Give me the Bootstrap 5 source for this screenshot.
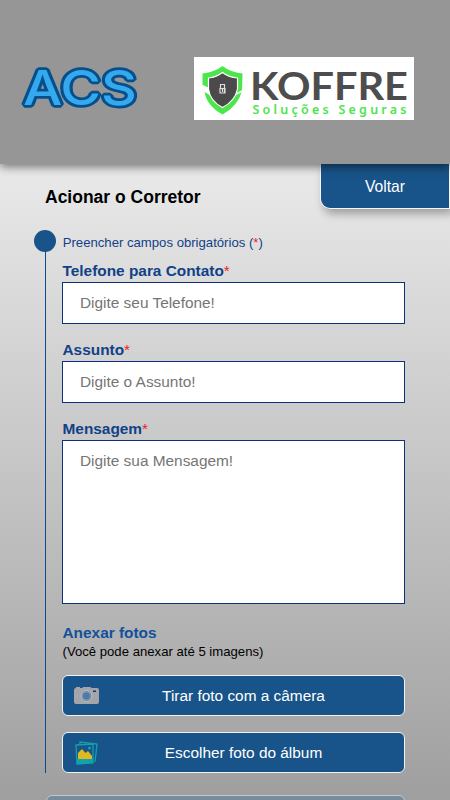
<!DOCTYPE html>
<html lang="pt-BR">
<head>
<meta charset="utf-8">
<meta name="viewport" content="width=device-width, initial-scale=1">
<title>Acionar o Corretor</title>
<link href="https://cdn.jsdelivr.net/npm/bootstrap@5.3.0/dist/css/bootstrap.min.css" rel="stylesheet">
<style>
html,body{height:800px;overflow:hidden}
body{font-family:"Liberation Sans",Arial,sans-serif;color:#000;background:linear-gradient(#eaeaea 164px,#dfdfdf 250px,#9f9f9f 800px)}
.topbar{height:164px;background:#969696;box-shadow:0 3px 9px rgba(0,0,0,.5);position:relative;z-index:2;padding:57px 36px 0 16px}
.titlebar{height:66px;padding-left:45px}
.page-title{font-size:17.5px;font-weight:700;line-height:20px;margin-top:23px}
.btn-back{width:130px;height:45px;background:#185489;color:#fff;font-size:15.7px;line-height:20px;border:solid #f5f5f5;border-width:0 1px 1px 1px;border-radius:0 0 0 10px;box-shadow:3px 5px 8px rgba(0,0,0,.3);padding:1px 0 0}
.steps{margin-left:44px;width:361px;height:543px;padding-left:18px;position:relative}
.steps::before{content:"";position:absolute;left:1px;top:11px;width:1px;height:532px;background:#0c4a94}
.steps::after{content:"";position:absolute;left:-10px;top:0;width:22px;height:22px;border-radius:50%;background:#185489}
.hint{font-size:13.15px;line-height:18px;color:#114187;padding:4px 0 0 .7px;margin-bottom:9px}
.field-label{display:block;font-size:15.4px;line-height:20px;font-weight:700;color:#114187;margin-bottom:1px;padding-left:.5px}
.req{color:#f01c24;font-weight:400}
.field{height:42px;border:1px solid #0c2f7e;border-radius:0;background:#fff;padding:0 17px;font-size:15.4px;line-height:40px;display:block;color:#333}
.field::placeholder{color:#757575;opacity:1}
textarea.field{height:164px;line-height:20px;padding-top:10px;resize:none}
.photos{padding-top:19px;margin-bottom:0;color:#11509b}
.note{font-size:13.15px;line-height:17px;padding-left:.5px;margin-bottom:15px}
.btn-photo{height:41px;width:343px;background:#185489;border:1px solid #f2f2f2;border-radius:6px;color:#fff;font-size:15.4px;line-height:20px;padding:0 10px}
.btn-photo svg{width:28px;height:28px;flex:none}
.btn-send{margin-left:46px;width:359px;height:44px;background:#788c9e;border:1px solid #c4c8cc;border-radius:6px;margin-top:22px}
</style>
<script src="https://cdn.jsdelivr.net/npm/bootstrap@5.3.0/dist/js/bootstrap.bundle.min.js"></script>
</head>
<body>
<header class="topbar d-flex justify-content-between align-items-start">
<svg width="130" height="66" viewBox="0 0 130 66" role="img" aria-label="ACS">
<text x="7" y="48" textLength="114" lengthAdjust="spacingAndGlyphs" font-family="Inter, sans-serif" font-weight="500" font-size="48" fill="#35a9ee" stroke="#064f8d" stroke-width="5.500" stroke-linejoin="bevel" paint-order="stroke">ACS</text>
</svg>
<svg width="220" height="63" viewBox="0 0 220 63" role="img" aria-label="Koffre Soluções Seguras">
<rect width="220" height="63" fill="#fff"/>
<path d="M28.500 9Q36 15 48.500 16.500L48 34Q44 49 28.500 57.500Q13 49 10.500 35L19 40Q21 46 28.500 50Q39 44 41.500 32L42 21Q34 20 28.500 16Q22 20 15 21V29L20 33L8.500 28V16.500Q21 15 28.500 9Z" fill="#4be64b"/>
<path d="M28.500 15.500Q35 20.500 43.500 21V32Q41 44 28.500 50.500Q16 44 14.500 32V21Q22 20.500 28.500 15.500Z" fill="#4b494a" stroke="#fff" stroke-width="1.200"/>
<path d="M42.500 37L49 33.500M8.500 29L14 32" stroke="#fff" stroke-width="1.500"/>
<path d="M26.500 31V27.500H30.500V36M26 31.500H31V36H26ZM28.500 32V35" fill="none" stroke="#ddd" stroke-width="1.200"/>
<text x="56" y="42.500" textLength="158" lengthAdjust="spacingAndGlyphs" font-family="Lato, sans-serif" font-weight="700" font-size="39" fill="#4e4d4d">KOFFRE</text>
<text x="58.500" y="56.500" textLength="154" font-family="Noto Sans, sans-serif" font-weight="600" font-size="12.500" fill="#4be64b">Soluções Seguras</text>
</svg>
</header>
<main>
<div class="titlebar d-flex justify-content-between align-items-start">
<h1 class="page-title mb-0">Acionar o Corretor</h1>
<button class="btn-back" type="button">Voltar</button>
</div>
<form class="steps">
<div class="hint">Preencher campos obrigatórios (<span class="req">*</span>)</div>
<div class="mb-3"><label class="field-label" for="tel">Telefone para Contato<span class="req">*</span></label>
<input class="field w-100" id="tel" placeholder="Digite seu Telefone!"></div>
<div class="mb-3"><label class="field-label" for="subject">Assunto<span class="req">*</span></label>
<input class="field w-100" id="subject" placeholder="Digite o Assunto!"></div>
<label class="field-label" for="message">Mensagem<span class="req">*</span></label>
<textarea class="field w-100" id="message" placeholder="Digite sua Mensagem!"></textarea>
<div class="field-label photos">Anexar fotos</div>
<div class="note">(Você pode anexar até 5 imagens)</div>
<button type="button" class="btn-photo d-flex align-items-center mb-3">
<svg viewBox="0 0 28 28" aria-hidden="true"><path d="M3 6V5H7V6H9L10.500 5H17L19 6H24Q26 6 26 8V20Q26 22 24 22H3Q1 22 1 20V8Q1 6 3 6Z" fill="#a3a5aa"/><circle cx="13.500" cy="14" r="5.300" fill="#4f7aa7" stroke="#d0d4da" stroke-width=".7"/><circle cx="13.500" cy="14" r="4" fill="none" stroke="#8397ae"/><path d="M20 8.500H23V10H20Z" fill="#123d68"/></svg>
<span class="flex-fill ps-1 pe-2 me-1">Tirar foto com a câmera</span></button>
<button type="button" class="btn-photo d-flex align-items-center">
<svg viewBox="0 0 28 28" aria-hidden="true"><g fill="none" stroke="#12a3aa" stroke-width="1.300"><path d="M7 5V3L24 5L22 23"/><path d="M3 6L20 5V24L4 25Z"/></g><path d="M3.500 20H20V24L4 25Z" fill="#12a3aa"/><path d="M5 20V14L9 10L12.500 14L15 12L19 17V20Z" fill="#dfb91f"/><circle cx="16.500" cy="9" r="1.600" fill="#12a3aa"/></svg>
<span class="flex-fill ps-1 pe-2 me-1">Escolher foto do álbum</span></button>
</form>
<button type="button" class="btn-send d-block" aria-label="Enviar"></button>
</main>
</body>
</html>
